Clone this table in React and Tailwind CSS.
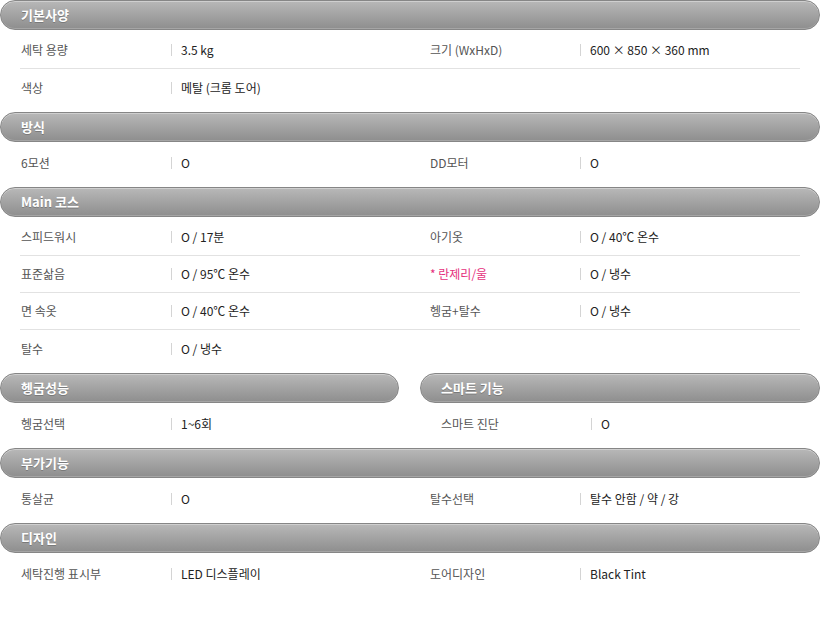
import React from "react";

const sections = [
  {
    title: "기본사양",
    rows: [
      [["세탁 용량", "3.5 kg"], ["크기 (WxHxD)", "600 × 850 × 360 mm"]],
      [["색상", "메탈 (크롬 도어)"], null],
    ],
  },
  {
    title: "방식",
    rows: [[["6모션", "O"], ["DD모터", "O"]]],
  },
  {
    title: "Main 코스",
    rows: [
      [["스피드워시", "O / 17분"], ["아기옷", "O / 40℃ 온수"]],
      [["표준삶음", "O / 95℃ 온수"], ["* 란제리/울", "O / 냉수", true]],
      [["면 속옷", "O / 40℃ 온수"], ["헹굼+탈수", "O / 냉수"]],
      [["탈수", "O / 냉수"], null],
    ],
  },
];

const tail = [
  {
    title: "부가기능",
    rows: [[["통살균", "O"], ["탈수선택", "탈수 안함 / 약 / 강"]]],
  },
  {
    title: "디자인",
    rows: [[["세탁진행 표시부", "LED 디스플레이"], ["도어디자인", "Black Tint"]]],
  },
];

function Header({ title }) {
  return (
    <div className="h-[30px] rounded-full border border-[#868686] bg-gradient-to-b from-[#b8b8b8] to-[#8e8e8e] shadow-[inset_0_1px_0_#cfcfcf,inset_0_-1px_0_#a5a5a5] flex items-center pl-[20px]">
      <span className="text-white font-bold text-[13px] [text-shadow:0_1px_0_#7a7a7a]">{title}</span>
    </div>
  );
}

function Cell({ item }) {
  if (!item) return <div />;
  const [label, value, pink] = item;
  return (
    <div className="flex items-center">
      <div className={`w-[150px] ${pink ? "text-[#e5307c]" : "text-[#555]"}`}>{label}</div>
      <div className="w-px h-[12px] bg-[#d4d4d4]" />
      <div className="pl-[9px] text-[#222]">{value}</div>
    </div>
  );
}

function Section({ title, rows }) {
  return (
    <div>
      <Header title={title} />
      <div className="pt-[2px] pb-[6px]">
        {rows.map((r, i) => (
          <div
            key={i}
            className={`mx-[20px] pl-px h-[37px] grid grid-cols-[409px_1fr] items-center ${
              i < rows.length - 1 ? "border-b border-[#e2e2e2]" : ""
            }`}
          >
            <Cell item={r[0]} />
            <Cell item={r[1]} />
          </div>
        ))}
      </div>
    </div>
  );
}

function HalfSection({ title, item }) {
  return (
    <div>
      <Header title={title} />
      <div className="pt-[2px] pb-[6px]">
        <div className="pl-[21px] h-[37px] flex items-center">
          <Cell item={item} />
        </div>
      </div>
    </div>
  );
}

export default function App() {
  return (
    <div
      className="w-[820px] h-[620px] bg-white text-[12px]"
      style={{ fontFamily: '"Noto Sans CJK KR", "Liberation Sans", sans-serif' }}
    >
      {sections.map((s) => (
        <Section key={s.title} {...s} />
      ))}
      <div className="grid grid-cols-[399px_400px] gap-x-[21px]">
        <HalfSection title="헹굼성능" item={["헹굼선택", "1~6회"]} />
        <HalfSection title="스마트 기능" item={["스마트 진단", "O"]} />
      </div>
      {tail.map((s) => (
        <Section key={s.title} {...s} />
      ))}
    </div>
  );
}
